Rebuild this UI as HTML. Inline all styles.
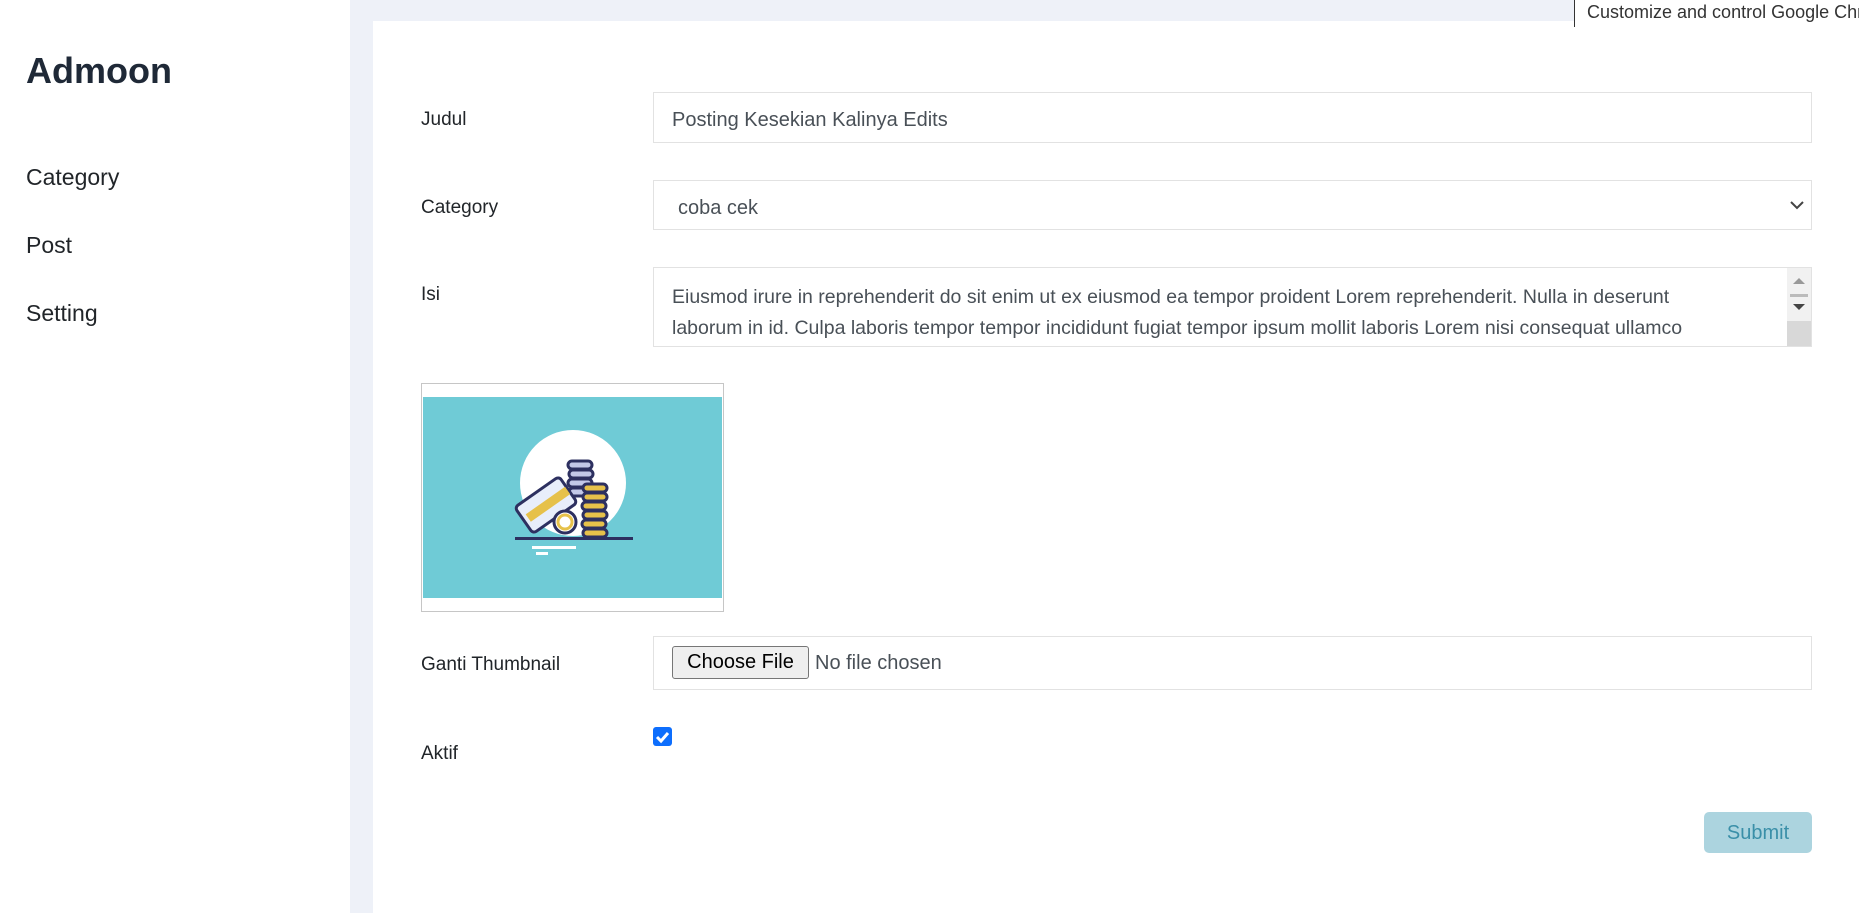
<!DOCTYPE html>
<html><head><style>
*{box-sizing:border-box;margin:0;padding:0}
body{width:1859px;height:913px;overflow:hidden;background:#eef1f8;font-family:"Liberation Sans",sans-serif;position:relative}
.side{position:absolute;left:0;top:0;width:350px;height:913px;background:#fff}
.logo{position:absolute;left:26px;top:50px;font-size:36px;font-weight:bold;color:#1f2937}
.nav{position:absolute;left:26px;font-size:23px;color:#212529}
.card{position:absolute;left:373px;top:21px;width:1486px;height:892px;background:#fff}
.lbl{position:absolute;left:421px;font-size:19px;color:#212529}
.inp{position:absolute;left:653px;width:1159px;border:1px solid #e2e2e2;background:#fff;font-size:20px;color:#495057}
.tip{position:absolute;left:1574px;top:0;height:27px;width:285px;background:#fff;border-left:1px solid #333;font-size:18px;color:#333;padding:2px 0 0 12px;white-space:nowrap;overflow:hidden}
</style></head><body>
<div class="side">
<div class="logo">Admoon</div>
<div class="nav" style="top:164px">Category</div>
<div class="nav" style="top:232px">Post</div>
<div class="nav" style="top:300px">Setting</div>
</div>
<div class="card"></div>
<div class="tip">Customize and control Google Chrome</div>

<div class="lbl" style="top:109px">Judul</div>
<div class="inp" style="top:92px;height:51px;padding:16px 18px 0">Posting Kesekian Kalinya Edits</div>

<div class="lbl" style="top:197px">Category</div>
<div class="inp" style="top:180px;height:50px;padding:16px 24px 0">coba cek
<svg style="position:absolute;right:6px;top:18px" width="16" height="12" viewBox="0 0 16 12"><path d="M2 3l6 6 6-6" fill="none" stroke="#444" stroke-width="2"/></svg></div>

<div class="lbl" style="top:284px">Isi</div>
<div class="inp" style="top:267px;height:80px;padding:14px 110px 0 18px;overflow:hidden;line-height:31px;font-size:19.5px">Eiusmod irure in reprehenderit do sit enim ut ex eiusmod ea tempor proident Lorem reprehenderit. Nulla in deserunt laborum in id. Culpa laboris tempor tempor incididunt fugiat tempor ipsum mollit laboris Lorem nisi consequat ullamco ad id dolor est
<div style="position:absolute;right:0;top:0;width:24px;height:78px;background:#f1f1f1">
<div style="position:absolute;left:6px;top:10px;border:6px solid transparent;border-bottom:6px solid #999;border-top:0"></div>
<div style="position:absolute;left:3px;top:26px;width:18px;height:3px;background:#bbb"></div>
<div style="position:absolute;left:6px;top:36px;border:6px solid transparent;border-top:6px solid #444;border-bottom:0"></div>
<div style="position:absolute;left:0;top:53px;width:24px;height:25px;background:#d8d8d8"></div>
</div></div>

<div style="position:absolute;left:421px;top:383px;width:303px;height:229px;border:1px solid #c6c6c6;background:#fff">
<div style="position:absolute;left:1px;top:13px;width:299px;height:201px;background:#6fcbd6">
<svg width="299" height="201" viewBox="0 0 299 201">
<circle cx="150" cy="86" r="53" fill="#fff"/>
<rect x="92" y="140" width="118" height="3" fill="#2d3060"/>
<rect x="109" y="149" width="44" height="3" fill="#fff"/><rect x="113" y="155" width="12" height="3" fill="#fff"/>
<g stroke="#2d3060" stroke-width="3">
<rect x="145" y="64" width="24" height="8" rx="4" fill="#c3c8e8"/>
<rect x="146" y="73" width="24" height="8" rx="4" fill="#c3c8e8"/>
<rect x="145" y="82" width="24" height="8" rx="4" fill="#c3c8e8"/>
<rect x="146" y="91" width="24" height="8" rx="4" fill="#c3c8e8"/>
<rect x="160" y="87" width="24" height="8" rx="4" fill="#e6c14a"/>
<rect x="160" y="96" width="24" height="8" rx="4" fill="#e6c14a"/>
<rect x="159" y="105" width="24" height="8" rx="4" fill="#e6c14a"/>
<rect x="160" y="114" width="24" height="8" rx="4" fill="#e6c14a"/>
<rect x="159" y="123" width="24" height="8" rx="4" fill="#e6c14a"/>
<rect x="160" y="132" width="24" height="8" rx="4" fill="#e6c14a"/>
<rect x="96" y="92" width="54" height="32" rx="4" fill="#e8eefa" transform="rotate(-35 123 108)"/>
<circle cx="142" cy="125" r="11" fill="#fff"/>
</g>
<rect x="101" y="104" width="48" height="9" fill="#e6c14a" transform="rotate(-35 123 108)"/>
<circle cx="142" cy="125" r="7" fill="#fff" stroke="#e6c14a" stroke-width="3"/>
</svg></div></div>

<div class="lbl" style="top:654px">Ganti Thumbnail</div>
<div class="inp" style="top:636px;height:54px"></div>
<div style="position:absolute;left:672px;top:646px;width:137px;height:33px;background:#efefef;border:1px solid #767676;border-radius:3px;font-size:20px;color:#000;text-align:center;line-height:31px">Choose File</div>
<div style="position:absolute;left:815px;top:652px;font-size:20px;color:#495057">No file chosen</div>

<div style="position:absolute;left:653px;top:727px;width:19px;height:19px;background:#0d6efd;border-radius:3px">
<svg width="19" height="19" viewBox="0 0 19 19"><path d="M4 10l4 4 7-8" fill="none" stroke="#fff" stroke-width="3"/></svg></div>
<div class="lbl" style="top:743px">Aktif</div>

<div style="position:absolute;left:1704px;top:812px;width:108px;height:41px;background:#acd4df;border-radius:5px;color:#3a8fa8;font-size:20px;text-align:center;line-height:43px">Submit</div>
</body></html>
